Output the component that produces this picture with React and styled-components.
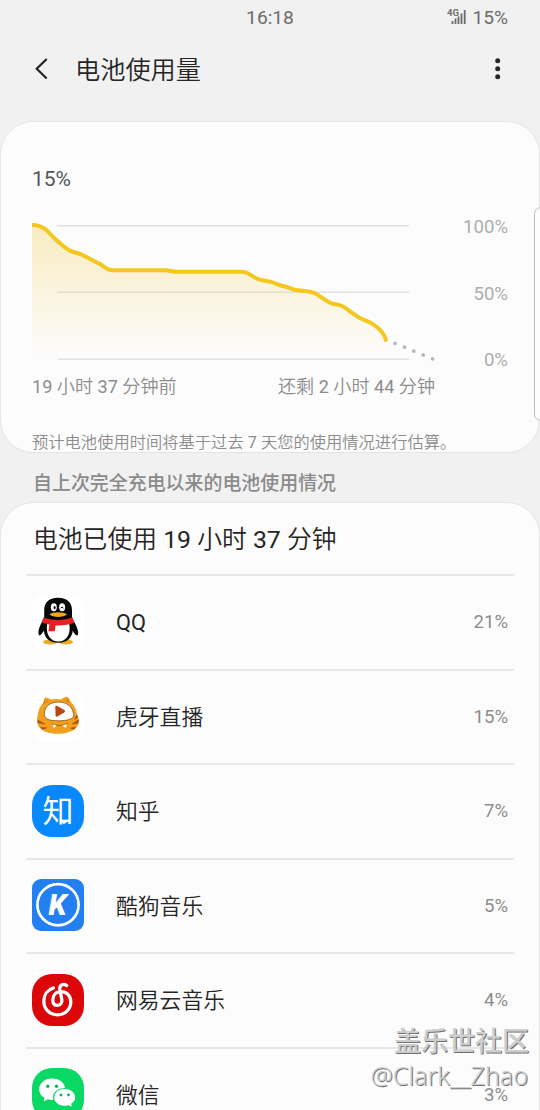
import styled, { createGlobalStyle } from 'styled-components';

const GlobalStyle = createGlobalStyle`
    * {
        box-sizing: border-box;
    }
    body {
        margin: 0;
        background-color: #f1f1f1;
        font-family: Roboto, 'Noto Sans CJK SC DemiLight', 'Noto Sans CJK SC', sans-serif;
        color: #252525;
    }
`;

const Screen = styled.div`
    position: relative;
    display: flex;
    flex-direction: column;
    height: 1110px;
    overflow: hidden;
`;

const StatusBar = styled.div`
    flex: none;
    display: grid;
    grid-template-columns: 1fr auto 1fr;
    align-items: center;
    height: 34px;
    padding: 0 32px;
    font-size: 19.2px;
    color: #6c6c6c;
    .status {
        display: flex;
        justify-content: flex-end;
        align-items: center;
        gap: 5px;
    }
    svg {
        display: block;
        margin-bottom: 2px;
    }
`;

const Header = styled.header`
    flex: none;
    display: flex;
    align-items: center;
    height: 87px;
    padding: 0 37px 18px 34px;
    h1 {
        flex: 1;
        margin: 5px 0 0 26px;
        font-size: 25.2px;
        line-height: 36px;
        font-weight: 400;
    }
    svg {
        display: block;
    }
`;

const Card = styled.section`
    flex: none;
    height: ${({ height }) => height}px;
    border: 1px solid #e4e4e4;
    border-radius: 33px;
    background-color: #fcfcfc;
    overflow: hidden;
`;

const ChartBox = styled.div`
    padding: 42px 31px 0;
    .level {
        font-size: 21px;
        line-height: 30px;
        color: #555;
    }
    .graph {
        display: flex;
        justify-content: space-between;
        margin-top: 24px;
    }
    .graph svg {
        display: block;
    }
`;

const Scale = styled.div`
    display: flex;
    flex-direction: column;
    justify-content: space-between;
    height: 155px;
    margin-top: -2px;
    text-align: right;
    font-size: 18.6px;
    line-height: 22px;
    color: #adadad;
`;

const Times = styled.div`
    display: flex;
    justify-content: space-between;
    width: 403px;
    margin-top: 2px;
    font-size: 18.1px;
    line-height: 28px;
    color: #8c8c8c;
`;

const Note = styled.p`
    margin: 30px 0 0;
    font-size: 16.3px;
    line-height: 24px;
    color: #8c8c8c;
    white-space: nowrap;
`;

const SectionTitle = styled.h2`
    flex: none;
    height: 49px;
    margin: 0;
    padding: 3px 33px 0;
    font-family: Roboto, 'Noto Sans CJK SC', sans-serif;
    font-size: 18.95px;
    line-height: 56px;
    font-weight: 500;
    color: #8a8a8a;
`;

const Total = styled.div`
    height: 71px;
    padding: 1px 0 0 32px;
    font-size: 24.8px;
    line-height: 71px;
`;

const AppRow = styled.li`
    display: flex;
    align-items: center;
    height: 94.5px;
    padding: 0 6px;
    border-top: 2px solid #e7e7e7;
    .name {
        flex: 1;
        margin: 2px 0 0 32px;
        font-size: 21.8px;
        line-height: 32px;
    }
    .percent {
        font-size: 18.6px;
        line-height: 24px;
        color: #8c8c8c;
    }
`;

const AppList = styled.ul`
    margin: 0;
    padding: 0 25px;
    list-style: none;
`;

const Logo = styled.div`
    width: 52px;
    height: 52px;
    margin-top: -1px;
    border-radius: ${({ radius }) => radius || 20}px;
    background-color: ${({ color }) => color};
    overflow: hidden;
    svg {
        display: block;
    }
`;

const EdgeHandle = styled.div`
    position: absolute;
    top: 207px;
    right: -8px;
    width: 14px;
    height: 214px;
    border: 1px solid #bdbdbd;
    border-radius: 7px;
    background-color: #fdfdfd;
`;

const Watermark = styled.div`
    position: absolute;
    right: 12px;
    bottom: 18px;
    text-align: right;
    white-space: nowrap;
    .club {
        margin-right: -1px;
        font-family: 'Noto Sans CJK SC', sans-serif;
        font-size: 27px;
        line-height: 36px;
        font-weight: 500;
        color: #cdcdcd;
        text-shadow: 1px 1px 0 #707070;
    }
    .user {
        font-family: 'Noto Sans', 'Noto Sans CJK SC', sans-serif;
        font-size: 25px;
        line-height: 34px;
        font-weight: 300;
        color: #cfcfcf;
        text-shadow: 1px 1px 0 #707070;
    }
`;

const SignalIcon = () => (
    <svg width="20" height="18" viewBox="0 0 20 18">
        <text
            x="0"
            y="8.5"
            fontSize="9.5"
            fontWeight="700"
            fill="#6c6c6c"
            fontFamily="Roboto, sans-serif"
        >
            4G
        </text>
        <path
            d="M5.5 14v3M8.5 11.5V17M11.5 9.5V17M14.5 6.5V17M17.7 3V17"
            stroke="#6c6c6c"
            strokeWidth="1.8"
        />
    </svg>
);

const CURVE =
    'M32 225C38 225 43 227 47 230.5C51 235 54 238 57 240.5C62 245 67 250 72 251.5C75 252.5 78 253 81 254.3L100 264C105 267 108 270.2 112 270.2H165C170 270.2 172 271.8 177 271.8H242C248 271.8 251 276 258 279C264 281.5 268 280.5 273 282.5C277 284 280 285.5 285 286.5C289 287.5 294 290 298 290.3C304 291.3 308 290.5 313 292.5C319 295 324 300 330 302.7C334 304.5 338 304 342 306C348 309 354 315 361 318.5C366 321 370 321.5 375 325.5C381 330 384.5 334 385.8 339.8';

const BatteryGraph = () => (
    <svg width="406" height="146" viewBox="32 218 406 146">
        <defs>
            <linearGradient id="fade" x1="0" y1="0" x2="0" y2="1">
                <stop offset="0" stopColor="#f2c022" stopOpacity="0.27" />
                <stop offset="1" stopColor="#f2c022" stopOpacity="0" />
            </linearGradient>
        </defs>
        <path d="M57.5 225.7H409M57.5 292.2H409M57.5 359.2H409" stroke="#e1e1e1" strokeWidth="1.5" />
        <path d={`${CURVE}V359H32Z`} fill="url(#fade)" />
        <path d={CURVE} fill="none" stroke="#f5c61c" strokeWidth="4" />
        <circle cx="385.8" cy="340" r="2" fill="#f5c61c" />
        <path
            d="M395 343.3L432.8 358.9"
            stroke="#b4b7ba"
            strokeWidth="3.6"
            strokeLinecap="round"
            strokeDasharray="0.1 10.05"
        />
    </svg>
);

const QQLogo = () => (
    <svg width="52" height="52" viewBox="0 0 52 52">
        <ellipse cx="18" cy="46" rx="7" ry="2.6" fill="#e8ad20" />
        <ellipse cx="34" cy="46" rx="7" ry="2.6" fill="#e8ad20" />
        <path
            d="M26 1.7C16.5 1.7 12.2 7 12.2 14V21C11.5 24 6.4 31 6.4 36.5C6.4 38.5 7 39.5 7.6 39.5C9 39.5 11 36 11.8 34.8C12.5 42.5 18 46.8 26.2 46.8S40 42.5 40.8 34.8C41.6 36.5 43.5 39.5 45 39.5C45.8 39.5 46.2 38 46.2 36.5C46 31 40.5 24 40 21V14C40 7 35.5 1.7 26 1.7Z"
            fill="#080808"
        />
        <path d="M15.2 28C13.5 38 18 45.5 26.3 45.5S39 38 37.3 28Z" fill="#fff" />
        <ellipse cx="21.8" cy="11.3" rx="3" ry="4" fill="#fff" />
        <ellipse cx="30.1" cy="11.3" rx="3" ry="4" fill="#fff" />
        <ellipse cx="22.6" cy="11.6" rx="1" ry="1.7" />
        <path d="M28.7 12.2Q30 9.8 31.5 12.2" stroke="#000" fill="none" />
        <path d="M17.5 18.5C20 15.6 32 15.6 35 18.5C31 21.8 21 21.8 17.5 18.5Z" fill="#eda81f" />
        <path
            d="M11.5 21.5C19 24.8 33 24.8 40.3 21.3L42.5 26.5C36 29.3 30 29.6 23.5 29.4L22.8 35.2H16.5L17.4 28.5C14.5 28 12 27.2 9.6 26.3Z"
            fill="#e61f24"
        />
    </svg>
);

const HuyaLogo = () => (
    <svg width="52" height="52" viewBox="0 0 52 52">
        <path
            d="M13 7.5Q16 7.2 18.5 9.6Q25 8.4 29 9.6Q32 7 35 6.5Q37.5 8.5 38.8 12C42.5 15.5 44.6 20 45.2 25.5C47.6 29 47.6 34 44.5 37.5C40 42 33 43.8 26 43.8C17 43.8 10 41.5 6.7 36.5C4.6 33 4.7 28 5.9 24.5C6.5 19.5 8.3 15.5 11.2 13Z"
            fill="#f0a01c"
        />
        <path d="M12.8 9L11.8 13.5L16 10.8M35 8L37.2 12L33 10.3" fill="none" stroke="#c07a1c" strokeWidth="0.8" />
        <path
            d="M12.3 23.5C12.8 15.8 18 12.3 26.5 12.1C35 12 40.5 16.5 41.7 24.5C42 29.3 35 30.8 26.5 30.8C17 30.8 12 29.3 12.3 23.5Z"
            fill="#fff"
            stroke="#8c5119"
            strokeWidth="0.8"
        />
        <path
            d="M23.3 17Q23.3 15 25.2 16L32.4 20Q34 21.2 32.4 22.3L25.5 26.5Q23.8 27.3 23.6 25.3Z"
            fill="#b54712"
        />
        <path
            d="M5.8 30L13.2 34L6 33ZM8.5 37.3L15 37.8L10.5 39.5ZM46.3 29.8L40 34L46.3 33.2ZM43.8 37L38.5 38L42 39.5ZM45 25L42 29.5L45.8 27.5Z"
            fill="#aa5417"
            stroke="#aa5417"
            strokeWidth="0.5"
        />
        <path d="M19.5 33.8Q27 37.5 36.2 33.4" fill="none" stroke="#a65b16" strokeWidth="0.9" />
        <path d="M20.5 34.5L24.6 35.5L21.8 38.3ZM30.5 35.5L35 34.2L33.5 38Z" fill="#fff" />
    </svg>
);

const ZhihuLogo = () => (
    <svg width="52" height="52" viewBox="0 0 52 52">
        <text
            x="26"
            y="37.2"
            fontSize="31"
            textAnchor="middle"
            fill="#fff"
            fontFamily="'Noto Sans CJK SC', sans-serif"
        >
            知
        </text>
        <path d="M29.5 35.5L31.8 38L36 35.3" fill="none" stroke="#fff" strokeWidth="2" />
    </svg>
);

const KugouLogo = () => (
    <svg width="52" height="52" viewBox="0 0 52 52">
        <circle cx="26" cy="25.7" r="20.6" fill="none" stroke="#fff" strokeWidth="2.7" />
        <text
            x="25.5"
            y="36"
            fontSize="29"
            fontWeight="900"
            fontStyle="italic"
            textAnchor="middle"
            fill="#fff"
            fontFamily="Roboto, sans-serif"
        >
            K
        </text>
    </svg>
);

const NeteaseLogo = () => (
    <svg width="52" height="52" viewBox="0 0 52 52">
        <path
            d="M21.5 13.9C15.5 15.7 11.8 21 11.8 27C11.8 35 17.5 40.8 25.5 40.8C33.5 40.8 38.8 34.8 38.8 27.8C38.8 21.5 34.5 17.7 28.8 17.7C23.5 17.7 20.8 21.8 20.8 26.2C20.8 29.4 22.5 31.4 25.3 31.4C28.5 31.4 30.4 28.8 29.8 25.2L27.8 15.5C27.2 11.2 31 9 34.8 11.6"
            fill="none"
            stroke="#fff"
            strokeWidth="3.3"
            strokeLinecap="round"
        />
    </svg>
);

const WechatLogo = () => (
    <svg width="52" height="52" viewBox="0 0 52 52">
        <path
            d="M20.2 10.4C12.5 10.4 7.2 15.2 7.2 21.2C7.2 24.8 9 27.8 12.4 29.8L11.6 33.6L15.8 31.3C23 33.5 33.2 29.5 33.2 21.2C33.2 15.2 27.8 10.4 20.2 10.4Z"
            fill="#fff"
        />
        <path
            d="M32.7 20.5C26 20.5 21.5 24.5 21.5 29.5C21.5 35.5 28.5 39.8 36.5 37.8L40.8 39.8L39.8 36C42.5 34.3 43.8 32 43.8 29.5C43.8 24.5 39.3 20.5 32.7 20.5Z"
            fill="#fff"
            stroke="#09d864"
            strokeWidth="1.2"
        />
        <g fill="#09b855">
            <circle cx="15.8" cy="18.2" r="1.7" />
            <circle cx="24.5" cy="18.2" r="1.7" />
            <circle cx="29" cy="27" r="1.4" />
            <circle cx="36.5" cy="27" r="1.4" />
        </g>
    </svg>
);

const apps = [
    { name: 'QQ', percent: 21, color: '#fff', radius: 10, Icon: QQLogo },
    { name: '虎牙直播', percent: 15, color: '#fff', radius: 10, Icon: HuyaLogo },
    { name: '知乎', percent: 7, color: '#0788fc', Icon: ZhihuLogo },
    { name: '酷狗音乐', percent: 5, color: '#2380f3', radius: 9, Icon: KugouLogo },
    { name: '网易云音乐', percent: 4, color: '#dc0708', Icon: NeteaseLogo },
    { name: '微信', percent: 3, color: '#09d864', Icon: WechatLogo },
];

const App = () => (
    <Screen>
        <GlobalStyle />
        <StatusBar>
            <span />
            <span>16:18</span>
            <div className="status">
                <SignalIcon />
                <span>15%</span>
            </div>
        </StatusBar>
        <Header>
            <svg width="15" height="24" viewBox="0 0 15 24">
                <path d="M12.7 2L2.7 11.8L12.7 21.5" fill="none" stroke="#252525" strokeWidth="2.2" />
            </svg>
            <h1>电池使用量</h1>
            <svg width="10" height="24" viewBox="0 0 10 24" fill="#252525">
                <circle cx="4.7" cy="3.7" r="2.5" />
                <circle cx="4.7" cy="11.7" r="2.5" />
                <circle cx="4.7" cy="19.7" r="2.5" />
            </svg>
        </Header>
        <Card height={332}>
            <ChartBox>
                <div className="level">15%</div>
                <div className="graph">
                    <BatteryGraph />
                    <Scale>
                        <span>100%</span>
                        <span>50%</span>
                        <span>0%</span>
                    </Scale>
                </div>
                <Times>
                    <span>19 小时 37 分钟前</span>
                    <span>还剩 2 小时 44 分钟</span>
                </Times>
                <Note>预计电池使用时间将基于过去 7 天您的使用情况进行估算。</Note>
            </ChartBox>
        </Card>
        <SectionTitle>自上次完全充电以来的电池使用情况</SectionTitle>
        <Card height={680}>
            <Total>电池已使用 19 小时 37 分钟</Total>
            <AppList>
                {apps.map(({ name, percent, color, radius, Icon }) => (
                    <AppRow key={name}>
                        <Logo color={color} radius={radius}>
                            <Icon />
                        </Logo>
                        <span className="name">{name}</span>
                        <span className="percent">{percent}%</span>
                    </AppRow>
                ))}
            </AppList>
        </Card>
        <EdgeHandle />
        <Watermark>
            <div className="club">盖乐世社区</div>
            <div className="user">@Clark__Zhao</div>
        </Watermark>
    </Screen>
);

export default App;
